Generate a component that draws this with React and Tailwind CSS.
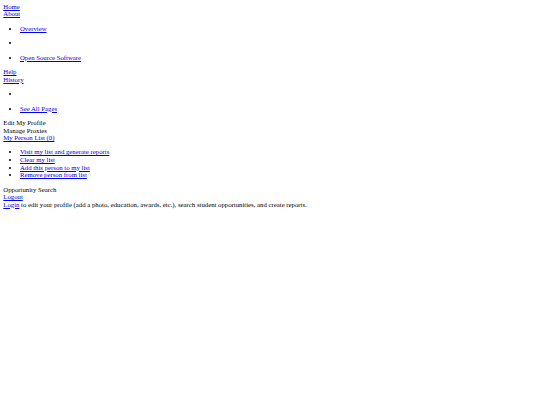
import React from 'react';

const link = 'text-[#0000ee] underline';

const App = () => {
  return (
    <div
      className="min-h-[405px] w-[540px] bg-white px-[3.3px] pt-[2.8px] text-black text-[6.75px] leading-[7.55px]"
      style={{ fontFamily: '"Liberation Serif", "Times New Roman", serif' }}
    >
      <div><a href="#" className={link}>Home</a></div>
      <div><a href="#" className={link}>About</a></div>
      <ul className="my-[6.9px] flex flex-col gap-[6.9px] list-disc pl-[16.6px]">
        <li><a href="#" className={link}>Overview</a></li>
        <li>&nbsp;</li>
        <li><a href="#" className={link}>Open Source Software</a></li>
      </ul>
      <div><a href="#" className={link}>Help</a></div>
      <div><a href="#" className={link}>History</a></div>
      <ul className="my-[6.9px] flex flex-col gap-[6.9px] list-disc pl-[16.6px]">
        <li>&nbsp;</li>
        <li><a href="#" className={link}>See All Pages</a></li>
      </ul>
      <div>Edit My Profile</div>
      <div>Manage Proxies</div>
      <div><a href="#" className={link}>My Person List (0)</a></div>
      <ul className="my-[6.9px] flex flex-col list-disc pl-[16.6px]">
        <li><a href="#" className={link}>Visit my list and generate reports</a></li>
        <li><a href="#" className={link}>Clear my list</a></li>
        <li><a href="#" className={link}>Add this person to my list</a></li>
        <li><a href="#" className={link}>Remove person from list</a></li>
      </ul>
      <div>Opportunity Search</div>
      <div><a href="#" className={link}>Logout</a></div>
      <div>
        <a href="#" className={link}>Login</a> to edit your profile (add a photo, education, awards, etc.), search student opportunities, and create reports.
      </div>
    </div>
  );
};

export default App;
